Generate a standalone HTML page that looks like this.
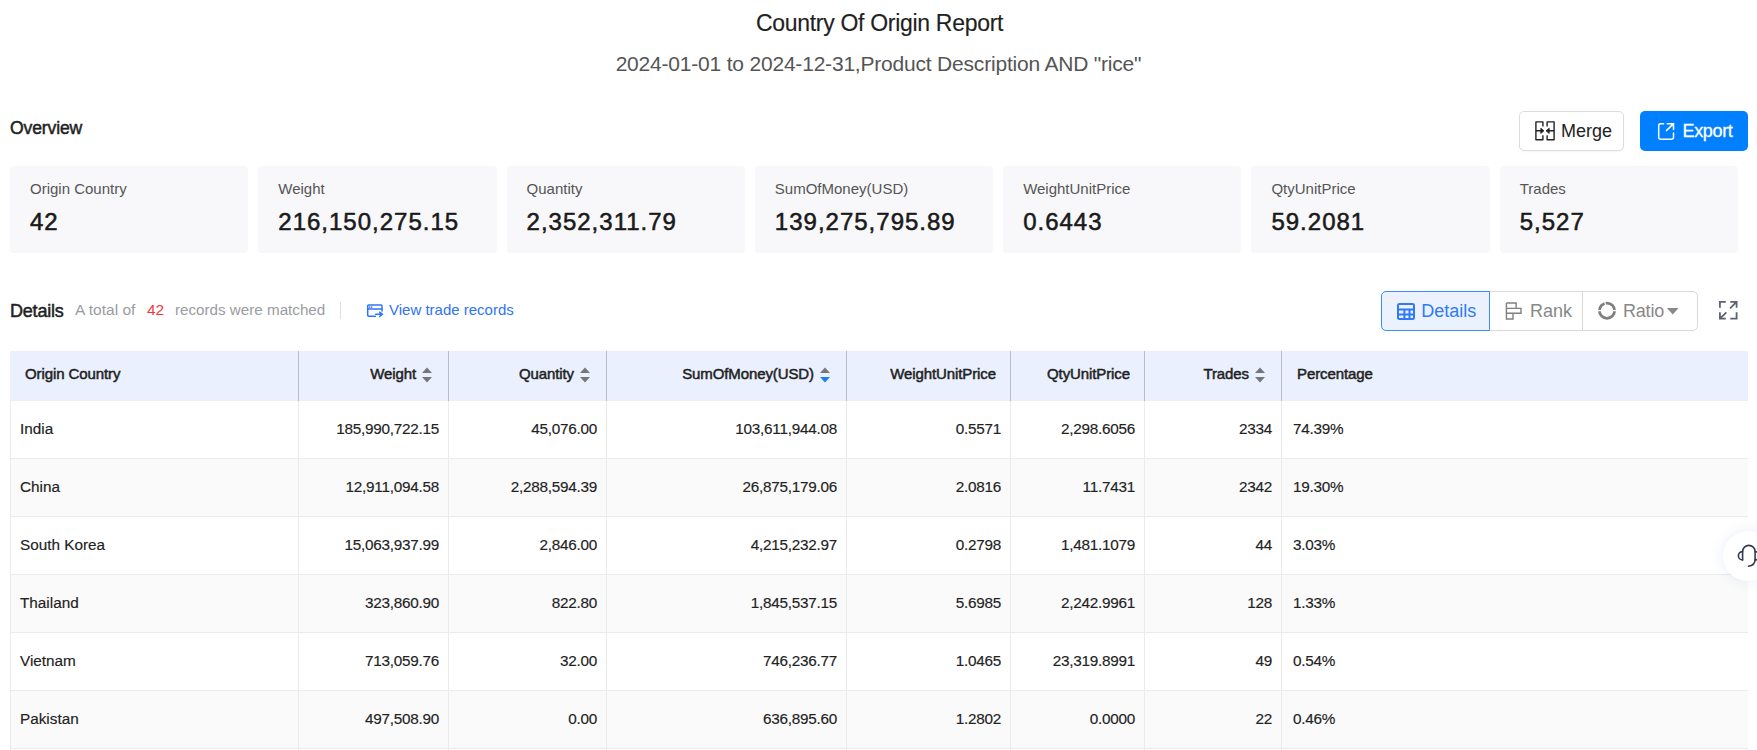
<!DOCTYPE html>
<html><head><meta charset="utf-8">
<style>
*{box-sizing:border-box;margin:0;padding:0}
html,body{width:1757px;height:750px;overflow:hidden;background:#fff;font-family:"Liberation Sans",sans-serif;color:#222}
div,svg{position:absolute;white-space:nowrap}
#title{left:0;width:1757px;text-align:center;top:7.7px;padding-left:2px;font-size:23px;letter-spacing:-0.3px;line-height:30px;color:#1f1f1f;-webkit-text-stroke:0.15px #1f1f1f}
#sub{left:0;width:1757px;text-align:center;top:49.5px;font-size:21px;letter-spacing:-0.2px;line-height:28px;color:#555}
#ov{left:10px;top:116px;font-size:17.6px;line-height:24px;color:#1f1f1f;-webkit-text-stroke:0.5px #1f1f1f;letter-spacing:-0.15px}
.btn{top:111px;height:40px;border-radius:5px;font-size:18px;line-height:24px}
#merge{left:1519px;width:105px;border:1px solid #dcdcdc;color:#222;background:#fff;box-shadow:0 1px 2px rgba(0,0,0,0.04)}
#export{left:1640px;width:108px;background:#0080ff;color:#fff}
.card{top:166px;height:87px;width:238.29px;background:#f8f8fa;border-radius:4px}
.card .l{left:20px;top:13px;font-size:15px;line-height:20px;color:#555}
.card .v{left:20px;top:41px;font-size:24px;line-height:30px;color:#1a1a1a;letter-spacing:1px;-webkit-text-stroke:0.55px #1a1a1a}
#det{left:10px;top:299px;font-size:18px;line-height:24px;color:#1f1f1f;-webkit-text-stroke:0.5px #1f1f1f;letter-spacing:-0.2px}
.gray{top:300px;font-size:15.5px;line-height:20px;color:#9a9ca3}
#n42{top:300px;font-size:15.5px;line-height:20px;color:#f03a3a}
#sep{left:340px;top:302px;width:1px;height:17px;background:#e0e0e0}
#vtr{left:389px;top:300px;font-size:15px;line-height:20px;color:#2f74f5}
.seg{top:291px;height:40px;font-size:18px;line-height:24px;color:#888}
.segt{top:300px;font-size:18px;line-height:24px;color:#888}
.thead{left:10px;top:351px;width:1738px;height:50px;background:#eaf0fd;border-bottom:1px solid #eeeeef}
.hl{top:351px;width:1px;height:50px;background:#b8bcc8}
.th{top:364px;font-size:15px;line-height:20px;color:#1f1f1f;-webkit-text-stroke:0.5px #1f1f1f;letter-spacing:-0.1px}
.sort{top:367px}
.row{left:10px;width:1738px;height:58px;border-bottom:1px solid #ebebeb}
.td{margin-top:17.5px;font-size:15.3px;letter-spacing:-0.25px;line-height:20px;color:#222;-webkit-text-stroke:0.15px #222}
.bl{top:401px;width:1px;height:349px;background:#ebebeb}

</style></head><body>
<div id="title">Country Of Origin Report</div>
<div id="sub">2024-01-01 to 2024-12-31,Product Description AND "rice"</div>
<div id="ov">Overview</div>
<div id="merge" class="btn"><div style="left:41px;top:7px">Merge</div></div>
<svg style="left:1535px;top:121px" width="20" height="20" viewBox="0 0 20 20" fill="none" stroke="#222" stroke-width="1.4" stroke-linejoin="round">
<path d="M7.9 5.6V0.9H0.9V18.7H7.9V14.2"/><path d="M12.1 5.6V0.9H19.1V18.7H12.1V14.2"/>
<path d="M0.9 9.8H6.5M19.1 9.8H13.5"/>
<path d="M5.8 7.2L9 9.8L5.8 12.4Z M14.2 7.2L11 9.8L14.2 12.4Z" fill="#222" stroke-width="0.8"/>
</svg>
<div id="export" class="btn"><div style="left:42.5px;top:8px;-webkit-text-stroke:0.3px #fff;letter-spacing:-0.35px">Export</div></div>
<svg style="left:1652px;top:116px" width="30" height="30" viewBox="0 0 30 30" fill="none" stroke="#fff" stroke-width="1.5" stroke-linecap="round">
<path d="M11.6 7.7H8.4Q6.7 7.7 6.7 9.4V21.6Q6.7 23.3 8.4 23.3H19.8Q21.5 23.3 21.5 21.6V17"/>
<path d="M15.2 7.7H21.5V13.6M21.3 7.9L14.4 14.6"/>
</svg>
<div class="card" style="left:10.00px"><div class="l">Origin Country</div><div class="v">42</div></div>
<div class="card" style="left:258.29px"><div class="l">Weight</div><div class="v">216,150,275.15</div></div>
<div class="card" style="left:506.57px"><div class="l">Quantity</div><div class="v">2,352,311.79</div></div>
<div class="card" style="left:754.86px"><div class="l">SumOfMoney(USD)</div><div class="v">139,275,795.89</div></div>
<div class="card" style="left:1003.14px"><div class="l">WeightUnitPrice</div><div class="v">0.6443</div></div>
<div class="card" style="left:1251.43px"><div class="l">QtyUnitPrice</div><div class="v">59.2081</div></div>
<div class="card" style="left:1499.71px"><div class="l">Trades</div><div class="v">5,527</div></div>
<div id="det">Details</div>
<div class="gray" style="left:75px">A total of</div>
<div id="n42" style="left:147px">42</div>
<div class="gray" style="left:175px;font-size:15.2px">records were matched</div>
<div id="sep"></div>
<svg style="left:362px;top:298px" width="26" height="26" viewBox="0 0 26 26" fill="none" stroke="#2f74f5" stroke-width="1.5" stroke-linecap="round">
<path d="M20 13V7.8Q20 6.9 19.1 6.9H6.6Q5.7 6.9 5.7 7.8V17.3Q5.7 18.2 6.6 18.2H13.3"/>
<path d="M5.7 11.1H20"/>
<path d="M13.6 16.3H20.4M17.6 14.2L20.4 16.3L17.6 18.5"/>
<circle cx="7.4" cy="9.1" r="0.4" stroke-width="0.8"/><circle cx="9.4" cy="9.1" r="0.4" stroke-width="0.8"/>
</svg>
<div id="vtr">View trade records</div>
<div class="seg" style="left:1381px;width:317px;border:1px solid #d9d9d9;border-radius:5px;background:#fff"></div>
<div class="seg" style="left:1582px;width:1px;background:#d9d9d9"></div>
<div class="seg" style="left:1381px;width:109px;border:1.5px solid #3b8ef7;border-radius:5px 0 0 5px;background:#ebf2fd"></div>
<svg style="left:1397px;top:303px" width="18" height="17" viewBox="0 0 18 17" fill="none" stroke="#2f7af6" stroke-width="2">
<rect x="1" y="1" width="16" height="15" rx="1.5"/><path d="M1 6.4H17M1 11.4H17M7.4 6.4V16M12.5 6.4V16"/>
</svg>
<div class="segt" style="left:1421.3px;top:299.3px;color:#2f7af6">Details</div>
<svg style="left:1505px;top:302px" width="18" height="18" viewBox="0 0 18 18" fill="none" stroke="#808080" stroke-width="1.4">
<path d="M1.4 1H11.1V6.4M1.4 1V17H8V11.2M1.4 6.4H16V11.2H1.4"/>
</svg>
<div class="segt" style="left:1530px;top:299.3px">Rank</div>
<svg style="left:1598px;top:301px" width="18" height="19" viewBox="0 0 18 19" fill="none">
<circle cx="9" cy="9.7" r="7.6" stroke="#808080" stroke-width="2.8"/>
<path d="M0 9.7H5M13 9.7H18M9 9.7L6.6 0" stroke="#fff" stroke-width="1.2"/>
</svg>
<div class="segt" style="left:1623px;top:299.3px;letter-spacing:-0.2px">Ratio</div>
<svg style="left:1667px;top:308px" width="12" height="7" viewBox="0 0 12 7"><path d="M0 0H11.5L5.75 6.5Z" fill="#888"/></svg>
<svg style="left:1718px;top:300px" width="20" height="20" viewBox="0 0 20 20" fill="none" stroke="#5d6175" stroke-width="1.8">
<path d="M7.8 1.9H1.9V7.8M12.3 1.9H18.6V7.8M12.1 8.4L18.3 2.2M1.9 12.3V18.6H7.8M8.4 12.3L2.2 18.3M18.6 12.3V18.6H12.3"/>
</svg>
<div class="thead"></div>
<div class="hl" style="left:298px"></div>
<div class="hl" style="left:448px"></div>
<div class="hl" style="left:606px"></div>
<div class="hl" style="left:846px"></div>
<div class="hl" style="left:1010px"></div>
<div class="hl" style="left:1144px"></div>
<div class="hl" style="left:1281px"></div>
<div class="th" style="left:25px">Origin Country</div>
<div class="th r" style="right:1341px">Weight</div>
<svg class="sort" style="left:422px" width="10" height="16" viewBox="0 0 10 16"><path d="M5 0.5L10 6H0Z" fill="#75767c"/><path d="M5 15.5L10 10H0Z" fill="#75767c"/></svg>
<div class="th r" style="right:1183px">Quantity</div>
<svg class="sort" style="left:580px" width="10" height="16" viewBox="0 0 10 16"><path d="M5 0.5L10 6H0Z" fill="#75767c"/><path d="M5 15.5L10 10H0Z" fill="#75767c"/></svg>
<div class="th r" style="right:943px">SumOfMoney(USD)</div>
<svg class="sort" style="left:820px" width="10" height="16" viewBox="0 0 10 16"><path d="M5 0.5L10 6H0Z" fill="#75767c"/><path d="M5 15.5L10 10H0Z" fill="#1a7cf5"/></svg>
<div class="th r" style="right:761px">WeightUnitPrice</div>
<div class="th r" style="right:627px">QtyUnitPrice</div>
<div class="th r" style="right:508px">Trades</div>
<svg class="sort" style="left:1255px" width="10" height="16" viewBox="0 0 10 16"><path d="M5 0.5L10 6H0Z" fill="#75767c"/><path d="M5 15.5L10 10H0Z" fill="#75767c"/></svg>
<div class="th" style="left:1297px">Percentage</div>
<div class="row" style="top:401px;background:#ffffff"></div>
<div class="td" style="top:401px;left:20px;letter-spacing:0">India</div>
<div class="td" style="top:401px;right:1318px">185,990,722.15</div>
<div class="td" style="top:401px;right:1160px">45,076.00</div>
<div class="td" style="top:401px;right:920px">103,611,944.08</div>
<div class="td" style="top:401px;right:756px">0.5571</div>
<div class="td" style="top:401px;right:622px">2,298.6056</div>
<div class="td" style="top:401px;right:485px">2334</div>
<div class="td" style="top:401px;left:1293px">74.39%</div>
<div class="row" style="top:459px;background:#fafafa"></div>
<div class="td" style="top:459px;left:20px;letter-spacing:0">China</div>
<div class="td" style="top:459px;right:1318px">12,911,094.58</div>
<div class="td" style="top:459px;right:1160px">2,288,594.39</div>
<div class="td" style="top:459px;right:920px">26,875,179.06</div>
<div class="td" style="top:459px;right:756px">2.0816</div>
<div class="td" style="top:459px;right:622px">11.7431</div>
<div class="td" style="top:459px;right:485px">2342</div>
<div class="td" style="top:459px;left:1293px">19.30%</div>
<div class="row" style="top:517px;background:#ffffff"></div>
<div class="td" style="top:517px;left:20px;letter-spacing:0">South Korea</div>
<div class="td" style="top:517px;right:1318px">15,063,937.99</div>
<div class="td" style="top:517px;right:1160px">2,846.00</div>
<div class="td" style="top:517px;right:920px">4,215,232.97</div>
<div class="td" style="top:517px;right:756px">0.2798</div>
<div class="td" style="top:517px;right:622px">1,481.1079</div>
<div class="td" style="top:517px;right:485px">44</div>
<div class="td" style="top:517px;left:1293px">3.03%</div>
<div class="row" style="top:575px;background:#fafafa"></div>
<div class="td" style="top:575px;left:20px;letter-spacing:0">Thailand</div>
<div class="td" style="top:575px;right:1318px">323,860.90</div>
<div class="td" style="top:575px;right:1160px">822.80</div>
<div class="td" style="top:575px;right:920px">1,845,537.15</div>
<div class="td" style="top:575px;right:756px">5.6985</div>
<div class="td" style="top:575px;right:622px">2,242.9961</div>
<div class="td" style="top:575px;right:485px">128</div>
<div class="td" style="top:575px;left:1293px">1.33%</div>
<div class="row" style="top:633px;background:#ffffff"></div>
<div class="td" style="top:633px;left:20px;letter-spacing:0">Vietnam</div>
<div class="td" style="top:633px;right:1318px">713,059.76</div>
<div class="td" style="top:633px;right:1160px">32.00</div>
<div class="td" style="top:633px;right:920px">746,236.77</div>
<div class="td" style="top:633px;right:756px">1.0465</div>
<div class="td" style="top:633px;right:622px">23,319.8991</div>
<div class="td" style="top:633px;right:485px">49</div>
<div class="td" style="top:633px;left:1293px">0.54%</div>
<div class="row" style="top:691px;background:#fafafa"></div>
<div class="td" style="top:691px;left:20px;letter-spacing:0">Pakistan</div>
<div class="td" style="top:691px;right:1318px">497,508.90</div>
<div class="td" style="top:691px;right:1160px">0.00</div>
<div class="td" style="top:691px;right:920px">636,895.60</div>
<div class="td" style="top:691px;right:756px">1.2802</div>
<div class="td" style="top:691px;right:622px">0.0000</div>
<div class="td" style="top:691px;right:485px">22</div>
<div class="td" style="top:691px;left:1293px">0.46%</div>
<div class="bl" style="left:10px"></div>
<div class="bl" style="left:298px"></div>
<div class="bl" style="left:448px"></div>
<div class="bl" style="left:606px"></div>
<div class="bl" style="left:846px"></div>
<div class="bl" style="left:1010px"></div>
<div class="bl" style="left:1144px"></div>
<div class="bl" style="left:1281px"></div>
<div style="left:1723px;top:531px;width:50px;height:50px;border-radius:50%;background:#fff;box-shadow:0 0 14px rgba(120,140,200,0.16)"></div>
<svg style="left:1730px;top:540px" width="27" height="30" viewBox="1730 540 27 30" fill="none" stroke="#363a4f" stroke-width="1.6" stroke-linecap="round">
<path d="M1742.6 560V551.6A6.25 6.25 0 0 1 1755.1 551.6V559Q1755.1 565.8 1748.4 566.2"/>
<path d="M1742.6 551.6A4.2 4.2 0 0 0 1742.6 560"/>
<path d="M1755.1 551.6A4.2 4.2 0 0 1 1755.1 560"/>
</svg>
</body></html>
